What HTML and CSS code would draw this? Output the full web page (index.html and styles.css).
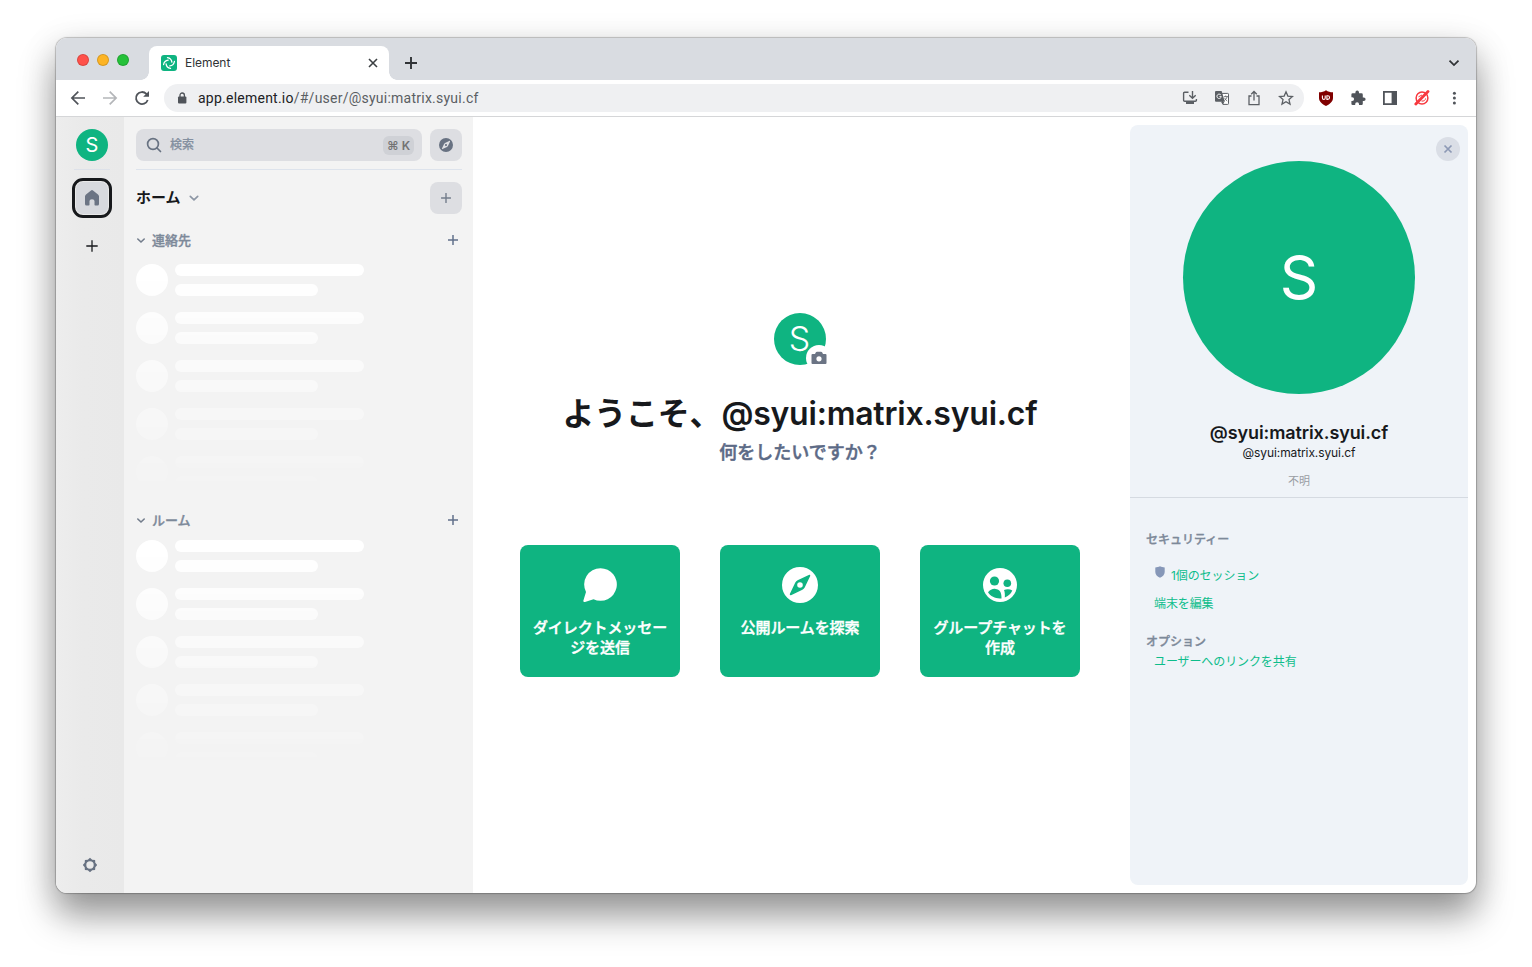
FILE: index.html
```html
<!DOCTYPE html>
<html lang="ja">
<head>
<meta charset="utf-8">
<title>Element</title>
<link rel="stylesheet" href="styles.css">
</head>
<body>
<div class="window">
  <header class="tabbar">
    <div class="lights"><i class="light red"></i><i class="light amber"></i><i class="light green"></i></div>
    <div class="tab">
      <svg class="favicon" viewBox="0 0 16 16"><rect width="16" height="16" rx="3" fill="#0fb481"/><g fill="none" stroke="#fff" stroke-width="1.300" stroke-linecap="round"><path d="M6.500 2.600a5.300 5.300 0 0 1 4.400 4.600"/><path d="M13.400 6.500a5.300 5.300 0 0 1-4.600 4.400"/><path d="M9.500 13.400a5.300 5.300 0 0 1-4.400-4.600"/><path d="M2.600 9.500a5.300 5.300 0 0 1 4.600-4.400"/></g></svg>
      <span class="tab-title">Element</span>
      <svg class="tab-close" viewBox="0 0 12 12"><path d="M2 2l8 8M10 2l-8 8" stroke="#3c4043" stroke-width="1.600"/></svg>
    </div>
    <svg class="new-tab" viewBox="0 0 14 14"><path d="M7 1v12M1 7h12" stroke="#303336" stroke-width="1.900"/></svg>
    <svg class="tab-menu" viewBox="0 0 12 12"><path d="M1.500 3.600L6 8.100l4.500-4.500" fill="none" stroke="#303336" stroke-width="1.800"/></svg>
  </header>

  <div class="toolbar">
    <svg class="nav" viewBox="0 0 16 16"><path d="M15 8H2.200M8.300 1.600L1.900 8l6.400 6.400" fill="none" stroke="#50545a" stroke-width="1.700"/></svg>
    <svg class="nav" viewBox="0 0 16 16"><path d="M1 8h12.800M7.700 1.600L14.100 8l-6.400 6.400" fill="none" stroke="#b4b6b9" stroke-width="1.700"/></svg>
    <svg class="nav" viewBox="0 0 16 16"><path d="M13.700 10a6 6 0 1 1-1.300-6.100l1.200 1.200" fill="none" stroke="#50545a" stroke-width="1.800"/><path d="M15 1v5.800H9.200z" fill="#50545a"/></svg>
    <div class="omnibox">
      <svg class="lock" viewBox="0 0 10 12"><rect x="1" y="4.500" width="8.400" height="7" rx="1" fill="#50545a"/><path d="M3 5V3.200a2.200 2.200 0 0 1 4.400 0V5" fill="none" stroke="#50545a" stroke-width="1.300"/></svg>
      <span class="url"><b>app.element.io</b>/#/user/@syui:matrix.syui.cf</span>
      <div class="omni-icons">
        <svg viewBox="0 0 16 16"><path d="M6.500 2.200H2.600q-1 0-1 1v7q0 1 1 1h10.800q1 0 1-1V9" fill="none" stroke="#5b5f64" stroke-width="1.400"/><path d="M4 11h8v3H4z" fill="#5b5f64"/><path d="M10.500 1v7M7.300 5.200l3.200 3 3.200-3" fill="none" stroke="#5b5f64" stroke-width="1.400"/></svg>
        <svg viewBox="0 0 16 16"><path d="M7 3.400h6.700q.8 0 .8.800v9.400q0 .8-.8.800H9z" fill="#fff" stroke="#5b5f64"/><path d="M2 1h5.600l3.200 10.700H2q-1 0-1-1V2q0-1 1-1z" fill="#5b5f64"/><path d="M7 11.700h3.500L8.700 14.400z" fill="#5b5f64"/><path d="M6.800 4.900a2.200 2.200 0 1 0 .5 1.700H5.400" fill="none" stroke="#fff" stroke-width=".9"/><path d="M9.800 6.600H14M11.700 5.500v1.100M13 6.600c-.2 1.700-1.200 3-2.700 3.900M10.600 7.900c.5 1.300 1.400 2.200 2.600 3.100" fill="none" stroke="#5b5f64" stroke-width=".8"/></svg>
        <svg viewBox="0 0 16 16"><path d="M5.500 6H3v8.600h10V6h-2.500" fill="none" stroke="#5b5f64" stroke-width="1.300"/><path d="M8 10.500V1.600M5.200 4.300L8 1.500l2.800 2.800" fill="none" stroke="#5b5f64" stroke-width="1.300"/></svg>
        <svg viewBox="0 0 16 16"><path d="M8 1.800l1.850 4.300 4.650.42-3.520 3.080 1.050 4.560L8 11.750l-4.030 2.410 1.050-4.560L1.500 6.520l4.650-.42z" fill="none" stroke="#5b5f64" stroke-width="1.300"/></svg>
      </div>
    </div>
    <div class="extensions">
      <svg viewBox="0 0 16 16"><path d="M8 .3c2 1.400 4.200 2 7 2V8c0 3.700-3 6-7 7.900C4 14 1 11.700 1 8V2.300c2.800 0 5-.6 7-2z" fill="#800000"/><path d="M4.400 5.500v2.500q0 1.400 1.400 1.400t1.400-1.400V5.500M8.900 5.700v3.700h.8a1.850 1.850 0 0 0 0-3.700z" fill="none" stroke="#fff" stroke-width="1.100"/></svg>
      <svg viewBox="0 0 16 16"><path d="M13.800 7.500h-1V4.700q0-1.400-1.300-1.400H9v-.9a1.800 1.800 0 0 0-3.600 0v.9H2.700Q1.400 3.300 1.400 4.600v2.600h.8a1.900 1.900 0 0 1 0 3.800h-.8v2.700Q1.400 15 2.700 15h2.500v-.9a1.900 1.900 0 0 1 3.800 0v.9h2.500q1.300 0 1.300-1.300v-2.600h1a1.800 1.800 0 0 0 0-3.600z" fill="#50545a"/></svg>
      <svg viewBox="0 0 16 16"><path d="M1.900 1.900h12.200v12.200H1.900z" fill="#fff" stroke="#50545a" stroke-width="1.800"/><path d="M9.600 2H14v12H9.600z" fill="#50545a"/></svg>
      <svg viewBox="0 0 16 16"><circle cx="8" cy="8" r="5.900" fill="none" stroke="#f7393f" stroke-width="1.500"/><path d="M4.500 6.800L8 5M7.500 11c2.300.4 3.800-.5 4.100-2.600" fill="none" stroke="#f7393f" stroke-width="1"/><path d="M1.800 14L14 1.500" stroke="#f7393f" stroke-width="2.800" stroke-linecap="round"/></svg>
      <svg viewBox="0 0 16 16"><g fill="#50545a"><circle cx="8.400" cy="3.200" r="1.500"/><circle cx="8.400" cy="8.100" r="1.500"/><circle cx="8.400" cy="13" r="1.500"/></g></svg>
    </div>
  </div>

  <div class="app">
    <nav class="rail">
      <div class="avatar avatar-s">S</div>
      <div class="rail-line"></div>
      <div class="home-btn"><div class="home-in"><svg viewBox="0 0 16 18"><path d="M7 1.400q1-.8 2 0l5 4.100q1 .8 1 2V15q0 1.500-1.500 1.500H11.300q-.8 0-.8-.8V12q0-1.700-2.500-1.700T5.500 12v3.700q0 .8-.8.800H2.500Q1 16.500 1 15V7.500q0-1.200 1-2z" fill="#6b7484"/></svg></div></div>
      <svg class="rail-plus" viewBox="0 0 12 12"><path d="M6 .3v11.400M.3 6h11.400" stroke="#17191c" stroke-width="1.300"/></svg>
      <svg class="gear" viewBox="0 0 16 16"><path fill-rule="evenodd" d="M8 .8L10.200 2.700 13.100 2.900 13.300 5.800 15.200 8 13.300 10.200 13.100 13.100 10.200 13.300 8 15.200 5.800 13.300 2.900 13.100 2.700 10.200 .8 8 2.700 5.800 2.900 2.900 5.800 2.700zM8 4.300a3.700 3.700 0 1 0 0 7.400 3.700 3.700 0 0 0 0-7.400z" fill="#687282"/></svg>
    </nav>

    <aside class="rooms">
      <div class="search-row">
        <div class="search"><svg viewBox="0 0 16 16"><circle cx="7" cy="7" r="5.400" fill="none" stroke="#687282" stroke-width="1.700"/><path d="M11 11l3.500 3.500" stroke="#687282" stroke-width="1.700" stroke-linecap="round"/></svg><span>検索</span><kbd>⌘ K</kbd></div>
        <div class="square"><svg class="i14" viewBox="0 0 36 36"><path fill-rule="evenodd" d="M18 0a18 18 0 1 0 0 36 18 18 0 0 0 0-36zM27.300 7.300Q28.700 6.900 28.500 8.700L23 20.500q-.8 1.600-2.500 2.500L9 28.600q-1.800.2-1.500-1.500L13 15.500q.8-1.700 2.500-2.500zM18 15.200a2.800 2.800 0 1 0 0 5.600 2.800 2.800 0 0 0 0-5.600z" fill="#687282"/></svg></div>
      </div>
      <div class="home-row"><span class="home-title">ホーム</span><svg class="chev" viewBox="0 0 10 10"><path d="M1.300 3.300L5 6.800l3.700-3.500" fill="none" stroke="#8d97a5" stroke-width="1.700" stroke-linecap="round"/></svg>
        <div class="square push"><svg class="i10" viewBox="0 0 10 10"><path d="M5 .4v9.200M.4 5h9.200" stroke="#737d8c" stroke-width="1.400" stroke-linecap="round"/></svg></div>
      </div>
      <section>
        <div class="sec-head"><svg viewBox="0 0 10 10"><path d="M1.800 4L5 7l3.200-3" fill="none" stroke="#737d8c" stroke-width="1.600" stroke-linecap="round"/></svg><span>連絡先</span><svg class="sec-plus" viewBox="0 0 10 10"><path d="M5 .4v9.200M.4 5h9.200" stroke="#61708b" stroke-width="1.500" stroke-linecap="round"/></svg></div>
        <div class="skeleton first">
          <div class="sk"><i></i><p></p><p></p></div><div class="sk"><i></i><p></p><p></p></div><div class="sk"><i></i><p></p><p></p></div><div class="sk"><i></i><p></p><p></p></div><div class="sk"><i></i><p></p><p></p></div>
        </div>
      </section>
      <section class="second">
        <div class="sec-head"><svg viewBox="0 0 10 10"><path d="M1.800 4L5 7l3.200-3" fill="none" stroke="#737d8c" stroke-width="1.600" stroke-linecap="round"/></svg><span>ルーム</span><svg class="sec-plus" viewBox="0 0 10 10"><path d="M5 .4v9.200M.4 5h9.200" stroke="#61708b" stroke-width="1.500" stroke-linecap="round"/></svg></div>
        <div class="skeleton">
          <div class="sk"><i></i><p></p><p></p></div><div class="sk"><i></i><p></p><p></p></div><div class="sk"><i></i><p></p><p></p></div><div class="sk"><i></i><p></p><p></p></div><div class="sk"><i></i><p></p><p></p></div>
        </div>
      </section>
    </aside>

    <main class="welcome">
      <div class="avatar avatar-m"><span class="initial">S</span><span class="camera"><svg viewBox="0 0 16 14"><path fill-rule="evenodd" d="M1.500 3H4l.9-1.700Q5.200.7 6 .7h4q.8 0 1.100.6L12 3h2.500q1 0 1 1v8q0 1-1 1h-13q-1 0-1-1V4q0-1 1-1zM8 5.200a2.600 2.600 0 1 0 0 5.200 2.600 2.600 0 0 0 0-5.200z" fill="#6b7484"/></svg></span></div>
      <h1>ようこそ、@syui:matrix.syui.cf</h1>
      <h2>何をしたいですか？</h2>
      <div class="cards">
        <div class="card"><svg viewBox="0 0 36 36"><path d="M18.500 1.200a16.300 16.300 0 1 1-7 31L3 34.900q-2 .5-1.600-1.500L4 25A16.300 16.300 0 0 1 18.500 1.200z" fill="#fff"/></svg><span>ダイレクトメッセージを送信</span></div>
        <div class="card"><svg viewBox="0 0 36 36"><path fill-rule="evenodd" d="M18 0a18 18 0 1 0 0 36 18 18 0 0 0 0-36zM27.300 7.800Q28.500 7.600 28.200 8.900L22.700 20.500q-.8 1.500-2.300 2.300L9 28.200q-1.400.2-1.200-1.200L13.300 15.500q.8-1.600 2.300-2.300zM18 15.200a2.800 2.800 0 1 0 0 5.600 2.800 2.800 0 0 0 0-5.600z" fill="#fff"/></svg><span>公開ルームを探索</span></div>
        <div class="card"><svg viewBox="0 0 36 36"><circle cx="18" cy="18" r="17" fill="#fff"/><g fill="#0fb481"><circle cx="12.500" cy="14" r="4.600"/><circle cx="25.300" cy="16.300" r="3.800"/><path d="M6 25.300c2-2.500 4.500-3.700 7.500-3.400 4.200.3 6.200 3.300 6 9.500-5.500.6-10.700-1.700-13.500-6.100z"/><path d="M22 23c3-1.300 5.900-1 8.300.5-1.600 3.500-4 5.700-7.500 7 .2-3.200 0-5.700-.8-7.500z"/></g></svg><span>グループチャットを作成</span></div>
      </div>
    </main>

    <aside class="profile">
      <div class="profile-top">
        <div class="close"><svg viewBox="0 0 10 10"><path d="M1.500 1.500l7 7M8.500 1.500l-7 7" stroke="#8d99b5" stroke-width="1.700"/></svg></div>
        <div class="avatar avatar-l">S</div>
        <div class="name">@syui:matrix.syui.cf</div>
        <div class="mxid">@syui:matrix.syui.cf</div>
        <div class="presence">不明</div>
      </div>
      <div class="profile-body">
        <h3>セキュリティー</h3>
        <div class="link session"><svg viewBox="0 0 10 12"><path d="M5 .3c1.500.8 3 1 4.700 1.200V6c0 2.700-2 4.500-4.700 5.700C2.300 10.500.3 8.700.3 6V1.500C2 1.300 3.500 1.100 5 .3z" fill="#8697b8"/></svg><span>1個のセッション</span></div>
        <div class="link edit">端末を編集</div>
        <h3 class="options">オプション</h3>
        <div class="link share">ユーザーへのリンクを共有</div>
      </div>
    </aside>
  </div>
</div>
</body>
</html>
```
FILE: styles.css
```css
* { box-sizing: border-box; margin: 0; padding: 0; }
body { width: 1532px; height: 967px; padding: 38px 56px; overflow: hidden; background: #fff; font-family: Inter, "Noto Sans CJK JP", sans-serif; color: #17191c; }
svg { display: block; flex: none; }
.window { width: 1420px; height: 855px; border-radius: 11px; overflow: hidden; background: #fff; box-shadow: 0 0 1px 1px rgba(0,0,0,.22), 0 23px 36px 0 rgba(0,0,0,.36), 0 8px 36px rgba(0,0,0,.14); }

.tabbar { height: 42px; background: #d9dce1; display: flex; align-items: center; }
.lights { display: flex; gap: 8px; padding: 1px 12px 0 21px; width: 93px; }
.light { width: 12px; height: 12px; border-radius: 50%; border: 0.5px solid rgba(0,0,0,.15); }
.red { background: #ff514a; }
.amber { background: #fdb424; }
.green { background: #25c139; }
.tab { width: 240px; height: 34px; align-self: flex-end; background: #fff; border-radius: 8px 8px 0 0; padding: 0 10px 0 12px; display: flex; align-items: center; position: relative; }
.tab::before, .tab::after { content: ""; position: absolute; bottom: 0; width: 8px; height: 8px; }
.tab::before { left: -8px; background: radial-gradient(circle at 0 0, transparent 7.5px, #fff 8px); }
.tab::after { right: -8px; background: radial-gradient(circle at 100% 0, transparent 7.5px, #fff 8px); }
.favicon { width: 16px; height: 16px; }
.tab-title { font: 12px/16px Inter, sans-serif; letter-spacing: -.05px; margin-left: 8px; color: #303336; }
.tab-close { width: 12px; height: 12px; margin-left: auto; }
.new-tab { width: 14px; height: 14px; margin: 8px 0 0 15px; }
.tab-menu { width: 12px; height: 12px; margin: 8px 16px 0 auto; }

.toolbar { height: 37px; border-bottom: 1px solid #d5d6d8; display: flex; align-items: center; padding: 0 14px; }
.nav { width: 16px; height: 16px; margin-right: 16px; }
.omnibox { width: 1140px; height: 28px; margin-left: -2px; background: #eff0f2; border-radius: 14px; display: flex; align-items: center; padding: 0 10px 0 13px; }
.lock { width: 10px; height: 12px; }
.url { margin-left: 11px; font: 14px/20px Roboto, sans-serif; letter-spacing: .24px; color: #5a5e63; white-space: nowrap; }
.url b { font-weight: 400; color: #202124; }
.omni-icons { margin-left: auto; display: flex; gap: 16px; }
.omni-icons svg, .extensions svg { width: 16px; height: 16px; }
.extensions { display: flex; gap: 16px; margin-left: 14px; }

.app { height: 776px; display: flex; }
.avatar { display: flex; align-items: center; justify-content: center; border-radius: 50%; background: #0fb481; color: #fff; flex: none; }
.avatar-s { width: 32px; height: 32px; font-size: 20px; }
.rail { width: 68px; background: linear-gradient(90deg, #ededed, #eaeaea 40%, #e9e9e9); display: flex; flex-direction: column; align-items: center; padding: 12px 0 20px 4px; }
.rail-line { width: 36px; height: 1px; margin: 8px 0; background: #dde1e9; }
.home-btn { width: 40px; height: 40px; border: 3px solid #17191c; border-radius: 11px; padding: 1px; background: #e9e9e9; }
.home-in { height: 32px; border-radius: 7px; background: #d7d9de; display: flex; align-items: center; justify-content: center; }
.home-in svg { width: 16px; height: 18px; }
.rail-plus { width: 12px; height: 12px; margin-top: 22px; }
.gear { width: 16px; height: 16px; margin: auto 4px 0 0; }

.rooms { width: 349px; background: #f3f3f3; padding: 12px 11px 0 12px; }
.search-row { display: flex; gap: 8px; padding-bottom: 8px; border-bottom: 1px solid #dde3ec; }
.search { flex: 1; height: 32px; border-radius: 8px; background: #dddee2; display: flex; align-items: center; padding: 0 8px 0 10px; }
.search svg { width: 16px; height: 16px; }
.search span { font-size: 12px; font-weight: 500; color: #8490a0; -webkit-text-stroke: .2px; margin-left: 8px; padding-bottom: 3px; }
.search kbd { margin-left: auto; width: 31px; height: 19px; border-radius: 6px; background: #cfd1d6; color: #737373; font: 600 12px/19px Inter, "DejaVu Sans", sans-serif; text-align: center; white-space: nowrap; }
.square { width: 32px; height: 32px; border-radius: 8px; background: #dddee2; display: flex; align-items: center; justify-content: center; }
.i14 { width: 14px; height: 14px; }
.i10 { width: 10px; height: 10px; }
.home-row { display: flex; align-items: center; height: 32px; margin-top: 12px; }
.home-title { font-size: 15px; font-weight: 600; padding-bottom: 3px; }
.chev { width: 10px; height: 10px; margin-left: 8px; }
.push { margin-left: auto; }
.sec-head { display: flex; align-items: center; height: 24px; margin-top: 14px; color: #7d8999; font-size: 13px; font-weight: 500; -webkit-text-stroke: .35px; }
.sec-head > svg { width: 10px; height: 10px; }
.sec-head span { margin-left: 6px; padding-bottom: 2px; }
.sec-head .sec-plus { margin: 0 4px 1px auto; width: 10px; height: 10px; }
.skeleton { display: grid; grid-auto-rows: 48px; height: 240px; margin-top: 8px; -webkit-mask-image: linear-gradient(#000, transparent 98%); mask-image: linear-gradient(#000, transparent 98%); }
.skeleton.first { margin-top: 12px; }
.second .sec-head { margin-top: 4px; }
.sk { display: grid; grid-template: 12px 12px / 32px 189px; row-gap: 8px; column-gap: 7px; height: 32px; }
.sk i { grid-row: 1 / 3; width: 32px; height: 32px; background: #fff; border-radius: 50%; }
.sk p { background: #fff; border-radius: 6px; height: 12px; }
.sk p + p { width: 143px; }

.welcome { width: 654px; margin-right: 3px; padding-top: 196px; display: flex; flex-direction: column; align-items: center; }
.avatar-m { width: 52px; height: 52px; font-size: 34px; font-weight: 300; position: relative; }
.initial { padding: 0 1px 2px 0; }
.camera { position: absolute; left: 32px; top: 32px; width: 26px; height: 26px; border-radius: 50%; background: #fff; display: flex; align-items: center; justify-content: center; }
.camera svg { width: 16px; height: 14px; }
.welcome h1 { font-size: 32px; line-height: 44px; font-weight: 600; letter-spacing: -.22px; margin-top: 27px; white-space: nowrap; }
.welcome h2 { font-size: 18px; line-height: 24px; font-weight: 500; color: #5c6a86; -webkit-text-stroke: .5px; margin-top: 5px; white-space: nowrap; }
.cards { display: flex; gap: 40px; margin-top: 80px; }
.card { width: 160px; height: 132px; border-radius: 8px; background: #0fb481; color: #fff; padding: 22px 12px 0; display: flex; flex-direction: column; align-items: center; text-align: center; font-size: 15px; line-height: 20px; font-weight: 500; -webkit-text-stroke: .4px; letter-spacing: -.1px; word-break: break-all; line-break: anywhere; }
.card svg { width: 36px; height: 36px; margin-bottom: 15px; }

.profile { width: 338px; height: 760px; margin-top: 8px; background: #eff3f8; border-radius: 8px; }
.profile-top { height: 373px; border-bottom: 1px solid #d5dae1; display: flex; flex-direction: column; align-items: center; padding-top: 12px; }
.close { align-self: flex-end; width: 24px; height: 24px; margin-right: 8px; border-radius: 50%; background: #dadee6; display: flex; align-items: center; justify-content: center; }
.close svg { width: 10px; height: 10px; }
.avatar-l { width: 232px; height: 233px; font-size: 60px; padding-bottom: 2px; }
.name { font-size: 18px; line-height: 25px; font-weight: 600; letter-spacing: -.1px; margin-top: 26px; }
.mxid { font-size: 12px; line-height: 15px; letter-spacing: -.1px; }
.presence { font-size: 11px; line-height: 16px; color: #999da3; margin-top: 13px; }
.profile-body { padding: 32px 16px 0; }
.profile-body h3 { font-size: 12px; line-height: 20px; font-weight: 500; color: #7d8999; -webkit-text-stroke: .35px; }
.link { font-size: 12px; line-height: 20px; color: #0dbd8b; padding-left: 8px; letter-spacing: -.1px; }
.session { display: flex; margin-top: 16px; }
.session svg { width: 10px; height: 12px; margin: 0 6px 0 1px; }
.edit { margin-top: 8px; }
.profile-body .options { margin-top: 18px; }
```
